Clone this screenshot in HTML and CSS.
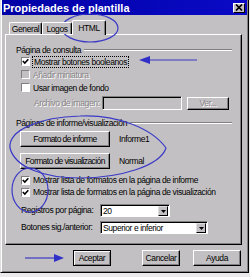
FILE: index.html
```html
<!DOCTYPE html>
<html>
<head>
<meta charset="utf-8">
<title>Propiedades de plantilla</title>
<link rel="stylesheet" href="styles.css">
</head>
<body>
<div class="screen">
  <div class="win">
    <div class="titlebar">
      <span class="title">Propiedades de plantilla</span>
      <span class="close"><svg width="8" height="7" viewBox="0 0 8 7"><path d="M1 0.5 L7 6.5 M7 0.5 L1 6.5" stroke="#000" stroke-width="1.7" fill="none"/></svg></span>
    </div>
    <div class="tabs">
      <div class="tab tab-general">General</div>
      <div class="tab tab-logos">Logos</div>
      <div class="tab tab-html active">HTML</div>
    </div>
    <div class="panel">
      <div class="group"><span>Página de consulta</span><span class="rule"></span></div>
      <div class="check"><span class="box"><svg width="7" height="7" viewBox="0 0 7 7"><path d="M0.8 3 L2.8 5 L6.3 1.3" stroke="#000" stroke-width="1.6" fill="none"/></svg></span><span class="focus">Mostrar botones booleanos</span></div>
      <div class="check disabled"><span class="box"></span><span class="dis">Añadir miniatura</span></div>
      <div class="check"><span class="box"></span><span>Usar imagen de fondo</span></div>
      <div class="file-row">
        <span class="file-label dis">Archivo de imagen:</span>
        <span class="field"></span>
        <span class="btn ver"><span class="dis">Ver...</span></span>
      </div>
      <div class="group g2"><span>Páginas de informe/visualización</span><span class="rule"></span></div>
      <div class="fmt-row">
        <span class="btn fmt">Formato de informe</span>
        <span class="fmt-val">Informe1</span>
      </div>
      <div class="fmt-row r2">
        <span class="btn fmt">Formato de visualización</span>
        <span class="fmt-val">Normal</span>
      </div>
      <div class="check c4"><span class="box"><svg width="7" height="7" viewBox="0 0 7 7"><path d="M0.8 3 L2.8 5 L6.3 1.3" stroke="#000" stroke-width="1.6" fill="none"/></svg></span><span>Mostrar lista de formatos en la página de informe</span></div>
      <div class="check c5"><span class="box"><svg width="7" height="7" viewBox="0 0 7 7"><path d="M0.8 3 L2.8 5 L6.3 1.3" stroke="#000" stroke-width="1.6" fill="none"/></svg></span><span>Mostrar lista de formatos en la página de visualización</span></div>
      <div class="combo-grid">
        <span class="clabel">Registros por página:</span>
        <span class="combo combo-short"><span class="cval">20</span><span class="drop"><svg width="5" height="3" viewBox="0 0 5 3"><path d="M0 0 H5 L2.5 3 Z" fill="#000"/></svg></span></span>
        <span class="clabel">Botones sig./anterior:</span>
        <span class="combo combo-long"><span class="cval">Superior e inferior</span><span class="drop"><svg width="5" height="3" viewBox="0 0 5 3"><path d="M0 0 H5 L2.5 3 Z" fill="#000"/></svg></span></span>
      </div>
    </div>
    <div class="actions">
      <span class="btn act default">Aceptar</span>
      <span class="btn act cancel">Cancelar</span>
      <span class="btn act help">Ayuda</span>
    </div>
  </div>
  <svg class="annot" width="250" height="277" viewBox="0 0 250 277">
    <g stroke="#3a3ac6" stroke-width="1.2" fill="none">
      <ellipse cx="90" cy="28" rx="28" ry="14"/>
      <line x1="197" y1="60" x2="146" y2="60"/>
      <path d="M80 116 C115 114 152 128 166 148 C160 166 120 178 80 178 C45 178 15 168 10 148 C8 130 40 117 80 116"/>
      <ellipse cx="30" cy="190" rx="18" ry="22"/>
      <line x1="25" y1="258" x2="57" y2="258"/>
    </g>
    <g fill="#3030c8">
      <polygon points="139,60 150,56 150,64"/>
      <polygon points="64,258 54,254 54,262"/>
    </g>
  </svg>
</div>
</body>
</html>
```

FILE: styles.css
```css
* { box-sizing: border-box; }

body {
  margin: 0;
  background: #ebe9eb;
  font-family: "Liberation Sans", Arial, sans-serif;
  font-size: 8.5px;
  letter-spacing: -0.4px;
  color: #000;
}

.screen {
  position: relative;
  width: 250px;
  height: 277px;
  overflow: hidden;
}

.win {
  width: 249px;
  height: 273px;
  background: #c3c0c3;
  border-left: 1px solid #dfdfdf;
  border-right: 1px solid #000;
  border-bottom: 1px solid #000;
  box-shadow: inset 1px 0 #fff, inset -1px -1px #808080;
  display: flex;
  flex-direction: column;
}

.titlebar {
  height: 15px;
  margin: 0 1px;
  padding: 0 2px 0 1px;
  background: linear-gradient(90deg, #0000a6, #0a0ac6);
  display: flex;
  align-items: center;
  justify-content: space-between;
}

.title {
  color: #fff;
  font-weight: bold;
  font-size: 11px;
  letter-spacing: 0;
}

.close {
  width: 12px;
  height: 10px;
  background: #c3c0c3;
  border-top: 1px solid #fff;
  border-left: 1px solid #fff;
  border-right: 1px solid #000;
  border-bottom: 1px solid #000;
  display: flex;
  align-items: center;
  justify-content: center;
}

.tabs {
  height: 15px;
  margin-top: 5px;
  padding-left: 8px;
  display: flex;
  align-items: flex-end;
  position: relative;
  z-index: 1;
}

.tab {
  height: 12px;
  background: #c3c0c3;
  border-top: 1px solid #fff;
  border-left: 1px solid #fff;
  border-right: 1px solid #000;
  border-radius: 2px 2px 0 0;
  box-shadow: inset -1px 0 #808080;
  display: flex;
  align-items: center;
  justify-content: center;
  margin-bottom: 1px;
}

.tab-general { width: 33px; }
.tab-logos { width: 30px; }
.tab-html { width: 34px; }

.tab.active {
  height: 15px;
  margin-bottom: 0;
}

.panel {
  width: 237px;
  height: 211px;
  margin-left: 4px;
  margin-top: -1px;
  border-top: 1px solid #fff;
  border-left: 1px solid #fff;
  border-right: 1px solid #000;
  border-bottom: 1px solid #000;
  box-shadow: inset -1px -1px #808080;
  display: flex;
  flex-direction: column;
}

.group {
  height: 11px;
  margin: 9px 9px 0 10px;
  display: flex;
  align-items: center;
}

.group.g2 { margin-top: 7px; }

.rule {
  flex: 1;
  height: 2px;
  margin-left: 3px;
  border-top: 1px solid #808080;
  border-bottom: 1px solid #fff;
}

.check {
  height: 13px;
  margin-left: 15px;
  display: flex;
  align-items: center;
  gap: 3px;
}

.check.c4 { margin-top: 5px; height: 12px; }
.check.c5 { height: 12px; }

.box {
  width: 9px;
  height: 9px;
  flex: none;
  background: #fff;
  border-top: 1px solid #808080;
  border-left: 1px solid #808080;
  border-right: 1px solid #fff;
  border-bottom: 1px solid #fff;
  display: flex;
  align-items: center;
  justify-content: center;
}

.check.disabled .box { background: #c3c0c3; }

.focus {
  outline: 1px dotted #000;
  outline-offset: 0;
  padding: 0 1px;
  line-height: 10px;
}

.dis {
  color: #878487;
  text-shadow: 1px 1px 0 #fff;
}

.file-row {
  height: 14px;
  margin-top: 2px;
  display: flex;
  align-items: center;
}

.file-label {
  width: 68px;
  margin-left: 28px;
}

.field {
  width: 80px;
  height: 14px;
  background: #c3c0c3;
  border-top: 1px solid #808080;
  border-left: 1px solid #808080;
  border-right: 1px solid #fff;
  border-bottom: 1px solid #fff;
  box-shadow: inset 1px 1px #000;
}

.btn {
  background: #c3c0c3;
  border-top: 1px solid #fff;
  border-left: 1px solid #fff;
  border-right: 1px solid #000;
  border-bottom: 1px solid #000;
  box-shadow: inset -1px -1px #808080;
  display: flex;
  align-items: center;
  justify-content: center;
  flex: none;
  white-space: nowrap;
}

.btn.ver {
  width: 42px;
  height: 13px;
  margin-left: 5px;
}

.fmt-row {
  height: 16px;
  margin-top: 3px;
  display: flex;
  align-items: center;
}

.fmt-row.r2 { margin-top: 6px; }

.btn.fmt {
  width: 90px;
  height: 16px;
  margin-left: 14px;
  letter-spacing: -0.6px;
}

.fmt-val { margin-left: 9px; }

.combo-grid {
  margin-top: 6px;
  margin-left: 15px;
  display: grid;
  grid-template-columns: 79px auto;
  row-gap: 4px;
  align-items: center;
}

.clabel { line-height: 13px; }

.combo {
  height: 13px;
  justify-self: start;
  background: #fff;
  border-top: 1px solid #808080;
  border-left: 1px solid #808080;
  border-right: 1px solid #fff;
  border-bottom: 1px solid #fff;
  box-shadow: inset 1px 1px #000;
  display: flex;
  align-items: stretch;
  padding: 1px 1px 0 2px;
}

.combo-short { width: 70px; }
.combo-long { width: 108px; }

.cval {
  flex: 1;
  display: flex;
  align-items: center;
}

.drop {
  width: 10px;
  background: #c3c0c3;
  border-top: 1px solid #dfdfdf;
  border-left: 1px solid #dfdfdf;
  border-right: 1px solid #000;
  border-bottom: 1px solid #000;
  display: flex;
  align-items: center;
  justify-content: center;
}

.actions {
  height: 16px;
  margin-top: 5px;
  display: flex;
}

.btn.act { height: 16px; }
.btn.default {
  width: 38px;
  margin-left: 72px;
  border: 1px solid #000;
  box-shadow: inset 1px 1px #fff, inset -1px -1px #808080;
}
.btn.cancel { width: 38px; margin-left: 31px; }
.btn.help { width: 48px; margin-left: 13px; }

.annot {
  position: absolute;
  left: 0;
  top: 0;
  pointer-events: none;
}
```
